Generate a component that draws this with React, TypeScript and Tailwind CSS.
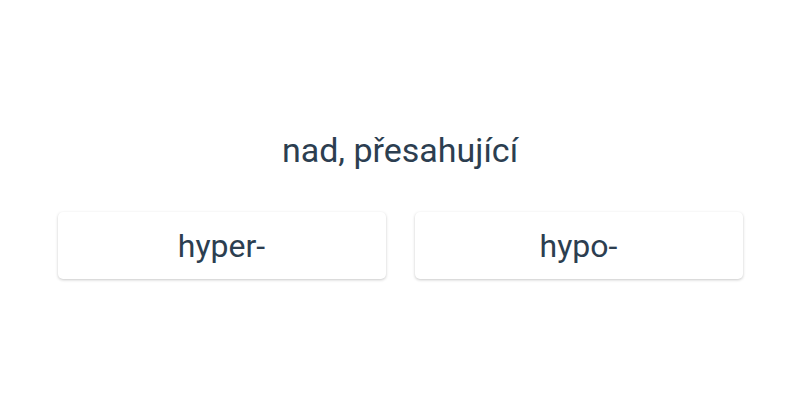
import React from "react";

export default function App() {
  return (
    <div className="w-[800px] h-[400px] bg-white flex flex-col items-center" style={{ fontFamily: "Roboto, sans-serif" }}>
      <div className="mt-[128px] text-[34px] leading-[44px] text-[#2c3e50]">nad, přesahující</div>
      <div className="mt-[40px] flex gap-[29px]">
        {["hyper-", "hypo-"].map((t) => (
          <div
            key={t}
            className="w-[328px] h-[67px] rounded-[5px] bg-white flex items-center justify-center text-[32px] text-[#2c3e50] shadow-[0_1px_3px_rgba(0,0,0,0.22)]"
          >
            {t}
          </div>
        ))}
      </div>
    </div>
  );
}
